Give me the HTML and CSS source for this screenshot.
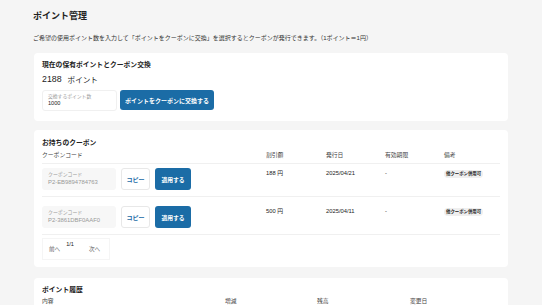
FILE: index.html
```html
<!DOCTYPE html>
<html lang="ja">
<head>
    <meta charset="UTF-8">
    <meta name="viewport" content="width=device-width, initial-scale=1.0">
    <title>ポイント管理</title>
    <link rel="stylesheet" href="styles.css">
</head>
<body>
    <div class="page">
        <h1 class="page-title">ポイント管理</h1>
        <p class="lead">ご希望の使用ポイント数を入力して「ポイントをクーポンに交換」を選択するとクーポンが発行できます。（1ポイント＝1円）</p>

        <section class="card exchange">
            <h2>現在の保有ポイントとクーポン交換</h2>
            <div class="balance">
                <span class="balance-num">2188</span>
                <span class="balance-unit">ポイント</span>
            </div>
            <div class="exchange-form">
                <div class="field">
                    <span class="field-label">交換するポイント数</span>
                    <span class="field-value">1000</span>
                </div>
                <button class="btn-primary btn-exchange">ポイントをクーポンに交換する</button>
            </div>
        </section>

        <section class="card coupons">
            <h2>お持ちのクーポン</h2>
            <div class="coupon-row head">
                <div>クーポンコード</div>
                <div>割引額</div>
                <div>発行日</div>
                <div>有効期限</div>
                <div>備考</div>
            </div>
            <div class="coupon-row first">
                <div class="code-cell">
                    <div class="code-box">
                        <span class="code-label">クーポンコード</span>
                        <span class="code-value">P2-EB9894784763</span>
                    </div>
                    <button class="btn-copy">コピー</button>
                    <button class="btn-primary btn-apply">適用する</button>
                </div>
                <div class="cell">188 円</div>
                <div class="cell">2025/04/21</div>
                <div class="cell">-</div>
                <div class="cell"><span class="badge">他クーポン併用可</span></div>
            </div>
            <div class="coupon-row">
                <div class="code-cell">
                    <div class="code-box">
                        <span class="code-label">クーポンコード</span>
                        <span class="code-value">P2-3861DBF0AAF0</span>
                    </div>
                    <button class="btn-copy">コピー</button>
                    <button class="btn-primary btn-apply">適用する</button>
                </div>
                <div class="cell">500 円</div>
                <div class="cell">2025/04/11</div>
                <div class="cell">-</div>
                <div class="cell"><span class="badge">他クーポン併用可</span></div>
            </div>
            <div class="pager">
                <button class="pager-btn">前へ</button>
                <span class="pager-num">1/1</span>
                <button class="pager-btn">次へ</button>
            </div>
        </section>

        <section class="card history">
            <h2>ポイント履歴</h2>
            <div class="history-row head">
                <div>内容</div>
                <div>増減</div>
                <div>残高</div>
                <div>変更日</div>
            </div>
        </section>
    </div>
</body>
</html>
```

FILE: styles.css
```css
body {
    margin: 0;
    background-color: #f5f5f5;
    font-family: "Liberation Sans", "Noto Sans CJK JP", sans-serif;
    color: #222;
}

.page {
    width: 474px;
    padding: 11px 0 0 34px;
}

.page-title {
    margin: 0 0 0 -1px;
    font-size: 9px;
    line-height: 11px;
    font-weight: bold;
}

.lead {
    margin: 12px 0 0 -1px;
    font-size: 6px;
    line-height: 8px;
    color: #333;
}

.card {
    background-color: #fff;
    border-radius: 4px;
    padding: 8px 8px 10px;
    margin-top: 10px;
}

.card h2 {
    margin: 0;
    font-size: 6.8px;
    line-height: 8px;
    font-weight: bold;
}

.exchange {
    margin-top: 11px;
}

.balance {
    display: flex;
    align-items: center;
    gap: 6px;
    margin-top: 4px;
    height: 12px;
}

.balance-num {
    font-size: 8.8px;
}

.balance-unit {
    font-size: 7.6px;
}

.exchange-form {
    display: flex;
    gap: 3px;
    margin-top: 5px;
}

.field {
    width: 75px;
    height: 21px;
    border: 1px solid #f0f0f0;
    border-radius: 3px;
    box-sizing: border-box;
    padding: 3px 0 0 5px;
    display: flex;
    flex-direction: column;
}

.field-label {
    font-size: 4.8px;
    line-height: 6px;
    color: #999;
}

.field-value {
    font-size: 5.6px;
    line-height: 7px;
}

button {
    font-family: inherit;
    cursor: pointer;
}

.btn-primary {
    background-color: #1b6ca6;
    color: #fff;
    border: none;
    border-radius: 3px;
    font-weight: bold;
}

.btn-exchange {
    width: 94px;
    height: 20px;
    font-size: 6px;
    padding: 0;
}

.coupons {
    margin-top: 9px;
    padding-bottom: 7px;
}

.coupons h2 {
    margin-top: 1px;
}

.coupon-row {
    display: grid;
    grid-template-columns: 224px 60px 59px 59px 1fr;
    border-bottom: 1px solid #f0f0f0;
    padding: 9px 0 6px;
    font-size: 5.8px;
    line-height: 8px;
}

.coupon-row.first {
    padding-top: 4px;
}

.coupon-row.head {
    margin-top: 4px;
    padding: 0 0 4px;
    color: #444;
}

.code-cell {
    display: flex;
    gap: 5px;
}

.code-box {
    width: 74px;
    height: 22px;
    background-color: #f7f7f7;
    border-radius: 3px;
    box-sizing: border-box;
    padding: 4px 0 0 6px;
    display: flex;
    flex-direction: column;
}

.code-label {
    font-size: 4.9px;
    line-height: 6px;
    color: #999;
}

.code-value {
    font-size: 5.9px;
    line-height: 8px;
    color: #999;
}

.btn-copy {
    width: 29px;
    height: 22px;
    background-color: #fff;
    border: 1px solid #e8e8e8;
    border-radius: 3px;
    color: #1b6ca6;
    font-weight: bold;
    font-size: 6px;
    padding: 0;
}

.btn-apply {
    width: 36px;
    height: 22px;
    font-size: 5.8px;
    padding: 0;
}

.cell {
    padding-top: 1px;
}

.badge {
    display: inline-block;
    background-color: #efefef;
    border-radius: 4px;
    padding: 0 2px;
    font-size: 4.4px;
    line-height: 8px;
    font-weight: bold;
}

.pager {
    display: flex;
    align-items: flex-start;
    width: 68px;
    height: 22px;
    margin-top: 3px;
    border: 1px solid #f5f5f5;
    box-sizing: border-box;
}

.pager-btn {
    background: none;
    border: none;
    color: #666;
    font-size: 5.6px;
    height: 20px;
    padding: 0 5px 0 6px;
}

.pager-num {
    font-size: 5.6px;
    line-height: 8px;
    margin: 1px 9px 0 1px;
}

.history {
    margin-top: 11px;
}

.history-row {
    display: grid;
    grid-template-columns: 183px 92px 93px 1fr;
    margin-top: 3px;
    font-size: 5.8px;
    line-height: 8px;
    color: #444;
}
```
